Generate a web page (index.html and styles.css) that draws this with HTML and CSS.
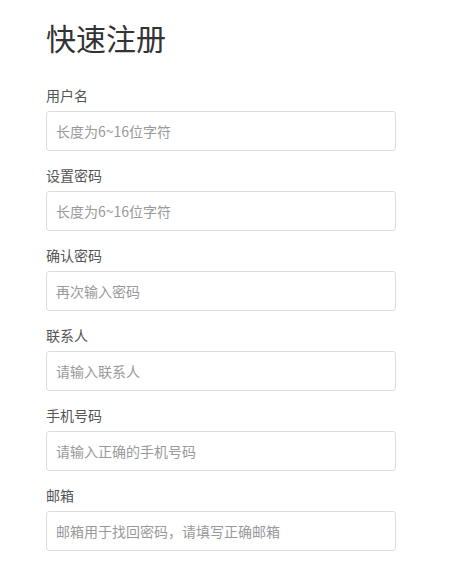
FILE: index.html
```html
<!DOCTYPE html>
<html lang="zh">
<head>
<meta charset="utf-8">
<link rel="stylesheet" href="styles.css">
</head>
<body>
<div class="page">
  <h1 class="title">快速注册</h1>
  <form class="form">
    <div class="group">
      <label class="label">用户名</label>
      <input class="input" type="text" placeholder="长度为6~16位字符">
    </div>
    <div class="group">
      <label class="label">设置密码</label>
      <input class="input" type="text" placeholder="长度为6~16位字符">
    </div>
    <div class="group">
      <label class="label">确认密码</label>
      <input class="input" type="text" placeholder="再次输入密码">
    </div>
    <div class="group">
      <label class="label">联系人</label>
      <input class="input" type="text" placeholder="请输入联系人">
    </div>
    <div class="group">
      <label class="label">手机号码</label>
      <input class="input" type="text" placeholder="请输入正确的手机号码">
    </div>
    <div class="group">
      <label class="label">邮箱</label>
      <input class="input" type="text" placeholder="邮箱用于找回密码，请填写正确邮箱">
    </div>
  </form>
</div>
</body>
</html>
```
FILE: styles.css
```css
html, body {
  margin: 0;
  padding: 0;
  background: #fff;
}
body {
  font-family: "Noto Sans CJK SC", "Microsoft YaHei", sans-serif;
  color: #333;
}
.page {
  padding: 19px 0 0 46px;
  width: 350px;
}
.title {
  margin: 0 0 30px 0;
  font-size: 30px;
  line-height: 36px;
  font-weight: normal;
  color: #333;
}
.form {
  display: flex;
  flex-direction: column;
  gap: 14px;
}
.group {
  display: flex;
  flex-direction: column;
  gap: 6px;
}
.label {
  font-size: 14px;
  line-height: 20px;
  color: #555;
}
.input {
  box-sizing: border-box;
  width: 350px;
  height: 40px;
  margin: 0;
  padding: 0 9px;
  border: 1px solid #dcdcdc;
  border-radius: 3px;
  font-family: inherit;
  font-size: 14px;
  color: #333;
  background: #fff;
  outline: none;
}
.input::placeholder {
  color: #999;
}
```
